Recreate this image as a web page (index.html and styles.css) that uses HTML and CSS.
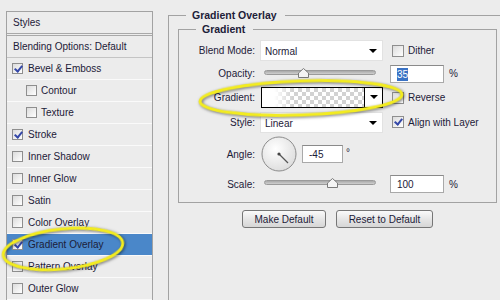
FILE: index.html
```html
<!DOCTYPE html>
<html lang="en">
<head>
    <meta charset="UTF-8">
    <title>Layer Style - Gradient Overlay</title>
    <link rel="stylesheet" href="styles.css">
</head>
<body>
    <div class="dialog">
        <div class="styles-panel">
            <div class="styles-head">Styles</div>
            <div class="blend-row">Blending Options: Default</div>
            <div class="style-row"><span class="chk on"></span>Bevel &amp; Emboss</div>
            <div class="style-row sub"><span class="chk"></span>Contour</div>
            <div class="style-row sub"><span class="chk"></span>Texture</div>
            <div class="style-row"><span class="chk on"></span>Stroke</div>
            <div class="style-row"><span class="chk"></span>Inner Shadow</div>
            <div class="style-row"><span class="chk"></span>Inner Glow</div>
            <div class="style-row"><span class="chk"></span>Satin</div>
            <div class="style-row"><span class="chk"></span>Color Overlay</div>
            <div class="style-row active"><span class="chk on"></span>Gradient Overlay</div>
            <div class="style-row"><span class="chk"></span>Pattern Overlay</div>
            <div class="style-row last"><span class="chk"></span>Outer Glow</div>
        </div>

        <fieldset class="group outer">
            <legend>Gradient Overlay</legend>
            <fieldset class="group inner">
                <legend>Gradient</legend>
                <div class="form-grid">
                    <label>Blend Mode:</label>
                    <div class="select">Normal<span class="arrow"></span></div>
                    <div class="extra"><span class="chk big"></span>Dither</div>

                    <label>Opacity:</label>
                    <div class="slider">
                        <div class="track"></div>
                        <svg class="thumb" style="left: 34.8%" width="11" height="10" viewBox="0 0 11 10"><path d="M5.5 0.5 L10.5 5 V9.5 H0.5 V5 Z" fill="#f4f4f4" stroke="#7a7a7a"/></svg>
                    </div>
                    <div class="extra"><div class="field num"><span class="sel">35</span></div><span class="unit">%</span></div>

                    <label>Gradient:</label>
                    <div class="swatch"><div class="swatch-fill"></div><div class="swatch-btn"><span class="arrow"></span></div></div>
                    <div class="extra"><span class="chk big"></span>Reverse</div>

                    <label>Style:</label>
                    <div class="select">Linear<span class="arrow"></span></div>
                    <div class="extra"><span class="chk big on"></span>Align with Layer</div>

                    <label>Angle:</label>
                    <div class="angle">
                        <svg class="dial" width="36" height="36" viewBox="0 0 36 36">
                            <defs>
                                <radialGradient id="dialBg" cx="40%" cy="35%" r="70%">
                                    <stop offset="0" stop-color="#ffffff"/>
                                    <stop offset="1" stop-color="#dcdcdc"/>
                                </radialGradient>
                            </defs>
                            <circle cx="18" cy="18" r="17" fill="url(#dialBg)" stroke="#8c8c8c"/>
                            <line x1="18" y1="18" x2="27" y2="27" stroke="#555" stroke-width="1.2"/>
                            <circle cx="18" cy="18" r="1.6" fill="#444"/>
                        </svg>
                        <div class="field deg">-45</div>
                        <span class="degree">°</span>
                    </div>
                    <div></div>

                    <label>Scale:</label>
                    <div class="slider">
                        <div class="track"></div>
                        <svg class="thumb" style="left: 60.7%" width="11" height="10" viewBox="0 0 11 10"><path d="M5.5 0.5 L10.5 5 V9.5 H0.5 V5 Z" fill="#f4f4f4" stroke="#7a7a7a"/></svg>
                    </div>
                    <div class="extra"><div class="field num">100</div><span class="unit">%</span></div>
                </div>
            </fieldset>
            <div class="buttons">
                <button class="btn make">Make Default</button>
                <button class="btn reset">Reset to Default</button>
            </div>
        </fieldset>
    </div>

    <!-- yellow highlight marks drawn over the dialog -->
    <svg class="marks" width="500" height="300" viewBox="0 0 500 300">
        <ellipse cx="63" cy="249" rx="60" ry="20" transform="rotate(-6 63 249)"/>
        <ellipse cx="301" cy="98" rx="101" ry="17" transform="rotate(-2 301 98)"/>
    </svg>
</body>
</html>
```

FILE: styles.css
```css
body {
    margin: 0;
    background: #ececec;
    font-family: "Liberation Sans", Arial, sans-serif;
    font-size: 10px;
    color: #1c2038;
    width: 500px;
    height: 300px;
    overflow: hidden;
    position: relative;
}
.dialog {
    display: flex;
    align-items: flex-start;
}
.styles-panel {
    margin: 11px 0 0 6px;
    width: 147px;
    height: 289px;
    box-sizing: border-box;
    border: 1px solid #a2a2a2;
    border-bottom: none;
    flex-shrink: 0;
    overflow: hidden;
}
.styles-head {
    height: 21px;
    line-height: 21px;
    padding-left: 6px;
    border-bottom: 3px double #a8a8a8;
}
.blend-row {
    height: 21px;
    line-height: 21px;
    padding-left: 6px;
    border-bottom: 1px solid #c4c4c4;
}
.style-row {
    height: 21px;
    display: flex;
    align-items: center;
    padding-left: 5px;
    border-bottom: 1px solid #fafafa;
}
.style-row.sub {
    padding-left: 19px;
}
.style-row.active {
    background: #4a87c9;
}
.chk {
    width: 11px;
    height: 11px;
    box-sizing: border-box;
    border: 1px solid #8e8e8e;
    background: linear-gradient(135deg, #dcdcdc, #ffffff);
    margin-right: 5px;
    position: relative;
    flex-shrink: 0;
}
.style-row.sub .chk {
    margin-right: 4px;
}
.chk.on::after {
    content: "";
    position: absolute;
    left: 3px;
    top: 0px;
    width: 3px;
    height: 6px;
    border-right: 2px solid #3548a8;
    border-bottom: 2px solid #3548a8;
    transform: rotate(40deg);
}
.chk.big {
    width: 12px;
    height: 12px;
    margin: 0 4px 0 2px;
}

.group {
    border: 1px solid #a2a2a2;
    margin: 0;
    min-width: 0;
}
.group legend {
    font-weight: bold;
    font-size: 10.5px;
    line-height: 14px;
    padding: 0 8px 0 6px;
}
.outer {
    flex: 1;
    margin: 8px 0 0 15px;
    padding: 0 0 0 9px;
    border-right: none;
    border-bottom: none;
    height: 292px;
    box-sizing: border-box;
}
.outer > legend {
    margin-left: 8px;
}
.inner {
    width: 319px;
    box-sizing: border-box;
    padding: 4px 0 7px 0;
}
.inner > legend {
    margin-left: 17px;
}
.form-grid {
    display: grid;
    grid-template-columns: 76px 123px auto;
    grid-template-rows: 21px 25px 23px 26px 38px 22px;
    column-gap: 5px;
    align-items: center;
}
.form-grid label {
    text-align: right;
}
.extra {
    display: flex;
    align-items: center;
    margin-left: 2px;
}
.select {
    height: 21px;
    line-height: 21px;
    background: #fff;
    border: 1px solid #e2e2e2;
    box-sizing: border-box;
    padding-left: 4px;
    position: relative;
}
.arrow {
    position: absolute;
    right: 5px;
    top: 8px;
    border-left: 4px solid transparent;
    border-right: 4px solid transparent;
    border-top: 4px solid #000;
}
.slider {
    position: relative;
    margin: 0 7px 0 4px;
    height: 10px;
}
.track {
    position: absolute;
    left: 0;
    right: 0;
    top: 1px;
    height: 5px;
    border-radius: 3px;
    background: linear-gradient(#a8a8a8, #cfcfcf);
    border: 1px solid #9a9a9a;
    box-sizing: border-box;
}
.thumb {
    position: absolute;
    top: -1px;
    margin-left: -5px;
}
.field {
    height: 18px;
    line-height: 17px;
    box-sizing: border-box;
    background: #fff;
    border: 1px solid #a9a9a9;
    border-top-color: #8a8a8a;
    padding-left: 6px;
}
.field.num {
    width: 54px;
}
.sel {
    background: #3a72c4;
    color: #fff;
    padding: 1px 0;
}
.unit {
    margin-left: 5px;
}
.swatch {
    display: flex;
    height: 21px;
    box-sizing: border-box;
    border: 1px solid #000;
    margin-left: 1px;
}
.swatch-fill {
    flex: 1;
    background-image:
        linear-gradient(to right, #fff 12%, rgba(255, 255, 255, 0) 30%),
        conic-gradient(#d2d2d2 25%, #fff 0 50%, #d2d2d2 0 75%, #fff 0);
    background-size: 100% 100%, 8px 8px;
}
.swatch-btn {
    width: 17px;
    border-left: 1px solid #000;
    background: #fff;
    position: relative;
}
.swatch-btn .arrow {
    right: 4px;
    top: 7px;
}
.angle {
    display: flex;
    align-items: center;
    margin-left: 1px;
}
.field.deg {
    width: 41px;
    margin-left: 5px;
}
.degree {
    align-self: flex-start;
    margin: 11px 0 0 3px;
}
.buttons {
    width: 319px;
    display: flex;
    justify-content: center;
    gap: 10px;
    margin-top: 7px;
}
.btn {
    font-family: "Liberation Sans", Arial, sans-serif;
    font-size: 10px;
    color: #1c2038;
    height: 18px;
    padding: 0;
    border: 1px solid #767676;
    border-radius: 3px;
    background: linear-gradient(#fafafa, #e6e6e6 50%, #d6d6d6);
}
.btn.make {
    width: 84px;
}
.btn.reset {
    width: 97px;
}
.marks {
    position: absolute;
    left: 0;
    top: 0;
    pointer-events: none;
}
.marks ellipse {
    fill: none;
    stroke: #f3ec1e;
    stroke-width: 3;
    filter: drop-shadow(1px 1px 1.5px rgba(0, 0, 0, 0.55));
}
```
